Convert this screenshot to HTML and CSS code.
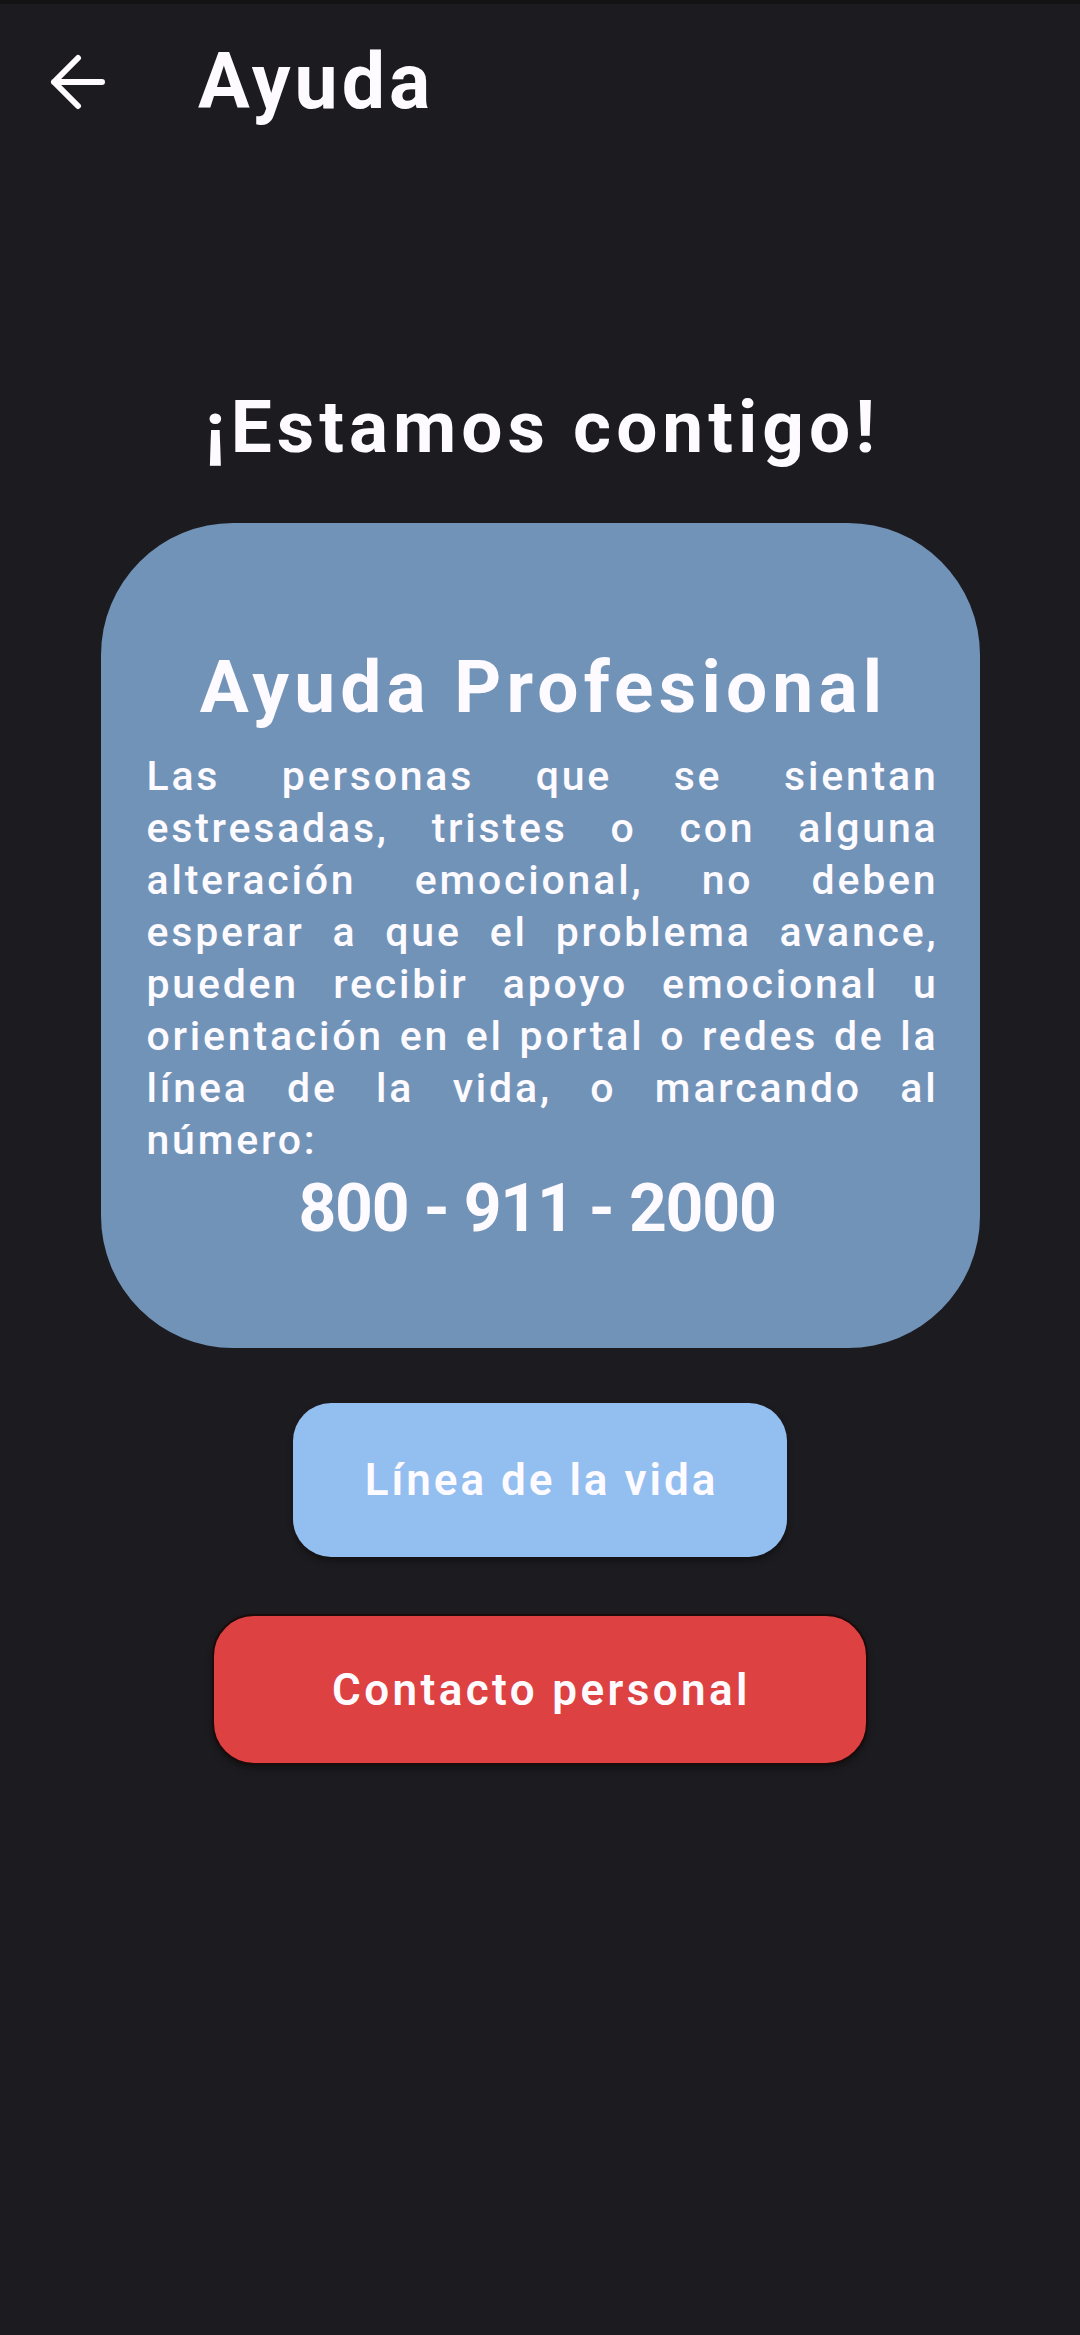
FILE: index.html
```html
<!DOCTYPE html>
<html lang="es">
<head>
<meta charset="utf-8">
<title>Ayuda</title>
<link rel="stylesheet" href="styles.css">
</head>
<body>
<div class="status"></div>
<header class="appbar">
  <svg class="back" width="56" height="56" viewBox="0 0 56 56" aria-hidden="true">
    <path d="M52 28H4M28 4L4 28L28 52" fill="none" stroke="#fdfbff" stroke-width="6" stroke-linecap="round" stroke-linejoin="round"/>
  </svg>
  <h1 class="appbar-title">Ayuda</h1>
</header>
<main class="content">
  <h2 class="headline">¡Estamos contigo!</h2>
  <section class="card">
    <h3 class="card-title">Ayuda Profesional</h3>
    <p class="card-text">
      <span class="line">Las personas que se sientan</span>
      <span class="line">estresadas, tristes o con alguna</span>
      <span class="line">alteración emocional, no deben</span>
      <span class="line">esperar a que el problema avance,</span>
      <span class="line">pueden recibir apoyo emocional u</span>
      <span class="line">orientación en el portal o redes de la</span>
      <span class="line">línea de la vida, o marcando al</span>
      <span class="line">número:</span>
    </p>
    <p class="phone">800 - 911 - 2000</p>
  </section>
  <button class="btn btn-blue">Línea de la vida</button>
  <button class="btn btn-red">Contacto personal</button>
</main>
</body>
</html>
```
FILE: styles.css
```css
html, body {
  margin: 0;
  padding: 0;
}
body {
  background: #1c1b1f;
  color: #fdfbff;
  font-family: Roboto, "Liberation Sans", sans-serif;
  width: 1080px;
  min-height: 2335px;
}
.status {
  height: 4px;
  background: #131316;
}
.appbar {
  height: 156px;
  display: flex;
  align-items: center;
  padding-left: 50px;
  gap: 92px;
}
.back {
  display: block;
  flex: none;
}
.appbar-title {
  margin: 0;
  font-size: 77px;
  line-height: 1;
  font-weight: 700;
  letter-spacing: 4px;
}
.content {
  display: flex;
  flex-direction: column;
  align-items: center;
}
.headline {
  margin: 231px 0 0;
  padding-left: 5px;
  font-size: 73px;
  line-height: 73px;
  font-weight: 700;
  letter-spacing: 5px;
  text-align: center;
}
.card {
  box-sizing: border-box;
  margin-top: 59px;
  width: 879px;
  height: 825px;
  background: #7293b8;
  border-radius: 132px;
  padding: 128px 44px 0 46px;
  display: flex;
  flex-direction: column;
  align-items: stretch;
}
.card-title {
  margin: 0;
  padding-left: 5px;
  font-size: 73px;
  line-height: 73px;
  font-weight: 700;
  letter-spacing: 5.2px;
  text-align: center;
}
.card-text {
  margin: 26px 0 0;
  font-size: 41px;
  line-height: 52px;
  font-weight: 500;
  letter-spacing: 2.8px;
}
.line {
  display: block;
  margin-right: -3px;
  white-space: nowrap;
  text-align: justify;
  text-align-last: justify;
}
.phone {
  margin: 10px 0 0;
  padding-right: 8px;
  font-size: 66px;
  line-height: 66px;
  font-weight: 700;
  letter-spacing: -1.2px;
  text-align: center;
}
.btn {
  box-sizing: border-box;
  font-family: Roboto, "Liberation Sans", sans-serif;
  font-size: 44px;
  font-weight: 600;
  letter-spacing: 3px;
  color: #fdfbff;
  border: none;
  padding: 0 0 0 3px;
  display: flex;
  align-items: center;
  justify-content: center;
  box-shadow: 0 4px 6px rgba(0, 0, 0, 0.35);
}
.btn-blue {
  margin-top: 55px;
  width: 494px;
  height: 154px;
  background: #93bef0;
  border-radius: 38px;
}
.btn-red {
  margin-top: 57px;
  width: 656px;
  height: 151px;
  background: #dd4141;
  border: 2px solid #1b0b0b;
  border-radius: 42px;
  letter-spacing: 3.4px;
}
```
